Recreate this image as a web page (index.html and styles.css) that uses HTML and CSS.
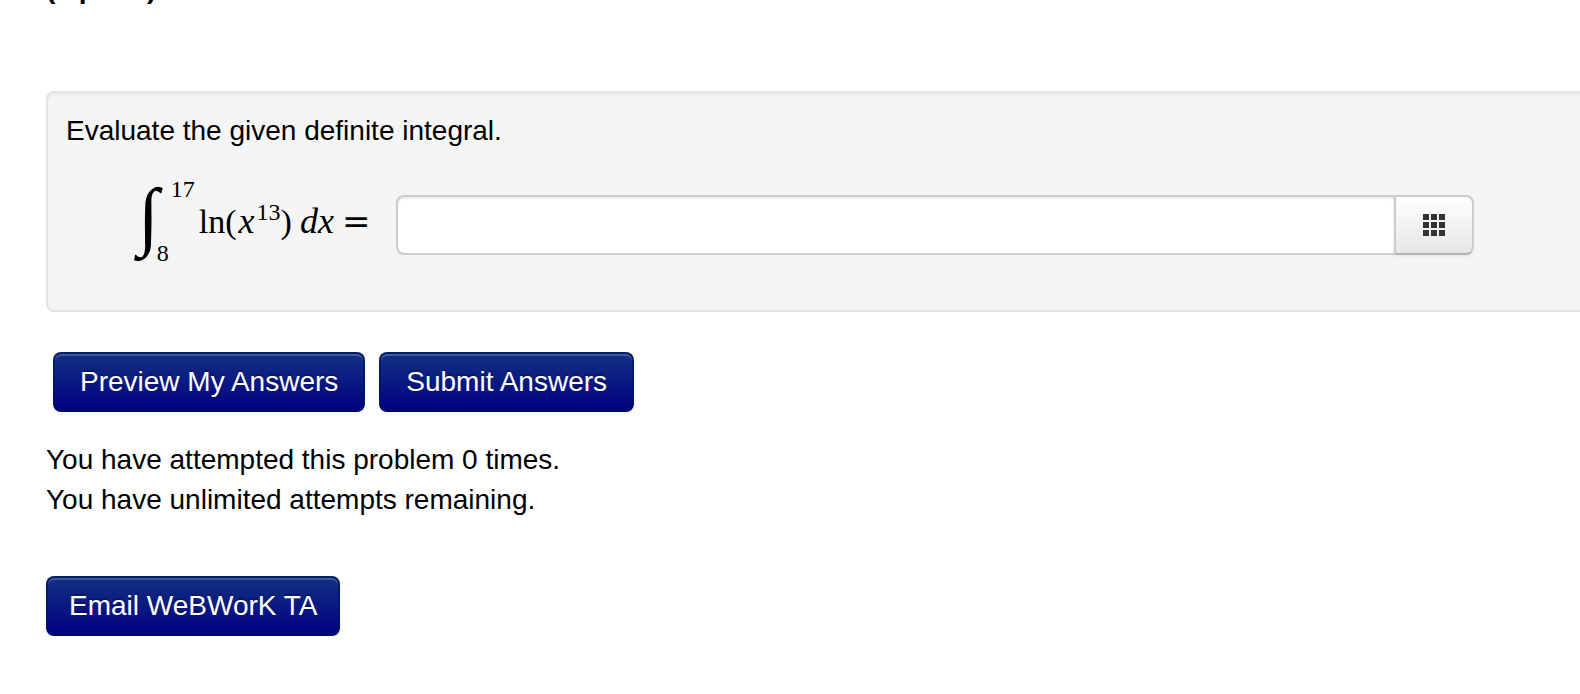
FILE: index.html
```
<!DOCTYPE html>
<html lang="en">
<head>
    <meta charset="UTF-8">
    <meta name="viewport" content="width=device-width, initial-scale=1.0">
    <title>WeBWorK</title>
    <link rel="stylesheet" href="styles.css">
</head>
<body>
    <main class="page">
        <p class="points">(1 point)</p>

        <form class="problem-form">
            <!-- Problem -->
            <div class="problem">
                <p>Evaluate the given definite integral.</p>
                <div class="answer-row">
                    <label class="formula" for="answer">
                        <span class="integral">∫</span>
                        <span class="limits">
                            <span class="upper">17</span>
                            <span class="lower">8</span>
                        </span>
                        <span class="integrand">ln(<i>x</i><sup>13</sup>)<i class="differential">dx</i><span class="equals">=</span></span>
                    </label>
                    <div class="input-group">
                        <input type="text" id="answer" name="answer" autocomplete="off">
                        <button type="button" class="btn-keypad" aria-label="Equation editor">
                            <svg width="24" height="24" viewBox="0 0 24 24" fill="#333">
                                <path d="M1 1h6v6H1zM9 1h6v6H9zM17 1h6v6h-6zM1 9h6v6H1zM9 9h6v6H9zM17 9h6v6h-6zM1 17h6v6H1zM9 17h6v6H9zM17 17h6v6h-6z"/>
                            </svg>
                        </button>
                    </div>
                </div>
            </div>

            <div class="submit-buttons">
                <button type="button" class="btn">Preview My Answers</button>
                <button type="submit" class="btn">Submit Answers</button>
            </div>
        </form>

        <!-- Attempts -->
        <div class="attempts">
            <p>You have attempted this problem 0 times.</p>
            <p>You have unlimited attempts remaining.</p>
        </div>

        <button type="button" class="btn btn-email">Email WeBWorK TA</button>
    </main>
</body>
</html>
```

FILE: styles.css
```
* {
    margin: 0;
    padding: 0;
    box-sizing: border-box;
}

body {
    font-family: "Liberation Sans", Arial, sans-serif;
    font-size: 28px;
    line-height: 40px;
    color: #000;
    background-color: #fff;
    overflow-x: hidden;
}

.page {
    margin-top: -31px;
    padding-left: 46px;
}

.points {
    font-weight: bold;
    margin-bottom: 82px;
}

/* Problem box, runs off the right side of the page */
.problem {
    margin-right: -8px;
    padding: 18px 0 18px 18px;
    background-color: #f5f5f5;
    border: 2px solid #e3e3e3;
    border-radius: 8px;
    box-shadow: inset 0 2px 2px rgba(0, 0, 0, 0.05);
}

.answer-row {
    display: flex;
    align-items: center;
    padding: 24px 112px 17px 72px;
}

/* Formula */
.formula {
    display: flex;
    align-items: center;
    flex: 0 0 258px;
    height: 100px;
    padding-bottom: 8px;
    font-family: "Liberation Serif", "Times New Roman", serif;
    font-size: 34px;
    white-space: nowrap;
}

.integral {
    align-self: flex-start;
    font-size: 76px;
    line-height: 80px;
}

.limits {
    display: flex;
    flex-direction: column;
    justify-content: space-between;
    height: 88px;
    margin-left: -2px;
    font-size: 24px;
    line-height: 24px;
}

.upper {
    padding-left: 14px;
}

.integrand {
    margin-left: 4px;
}

.integrand i {
    font-size: 36px;
    margin-left: 2px;
}

.integrand sup {
    margin-left: 2px;
    font-size: 24px;
    line-height: 0;
}

.integrand .differential {
    margin-left: 8px;
}

.equals {
    margin-left: 8px;
    font-family: "DejaVu Serif", serif;
    line-height: 40px;
}

/* Answer box */
.input-group {
    display: flex;
    flex: 1;
    height: 60px;
}

.input-group input {
    flex: 1;
    min-width: 0;
    padding: 8px 12px;
    font: inherit;
    background-color: #fff;
    border: 2px solid #ccc;
    border-right: none;
    border-radius: 8px 0 0 8px;
    box-shadow: inset 0 2px 2px rgba(0, 0, 0, 0.075);
}

.btn-keypad {
    display: flex;
    align-items: center;
    justify-content: center;
    width: 80px;
    background: linear-gradient(#fff, #e6e6e6);
    border: 2px solid #ccc;
    border-bottom-color: #b3b3b3;
    border-radius: 0 8px 8px 0;
    box-shadow: 0 2px 4px rgba(0, 0, 0, 0.05);
    cursor: pointer;
}

/* Buttons */
.btn {
    height: 60px;
    padding: 8px 25px;
    font: inherit;
    color: #fff;
    text-shadow: 0 -2px 0 rgba(0, 0, 0, 0.25);
    background: linear-gradient(#123282, #000080) border-box;
    border: 2px solid rgba(0, 20, 90, 0.6);
    border-radius: 8px;
    box-shadow: inset 0 2px 0 rgba(255, 255, 255, 0.2), 0 2px 4px rgba(0, 0, 0, 0.05);
    cursor: pointer;
}

.btn-email {
    padding: 8px 21px;
}

.submit-buttons {
    display: flex;
    gap: 14px;
    padding: 40px 7px 28px;
}

.attempts {
    margin-bottom: 56px;
}
```
